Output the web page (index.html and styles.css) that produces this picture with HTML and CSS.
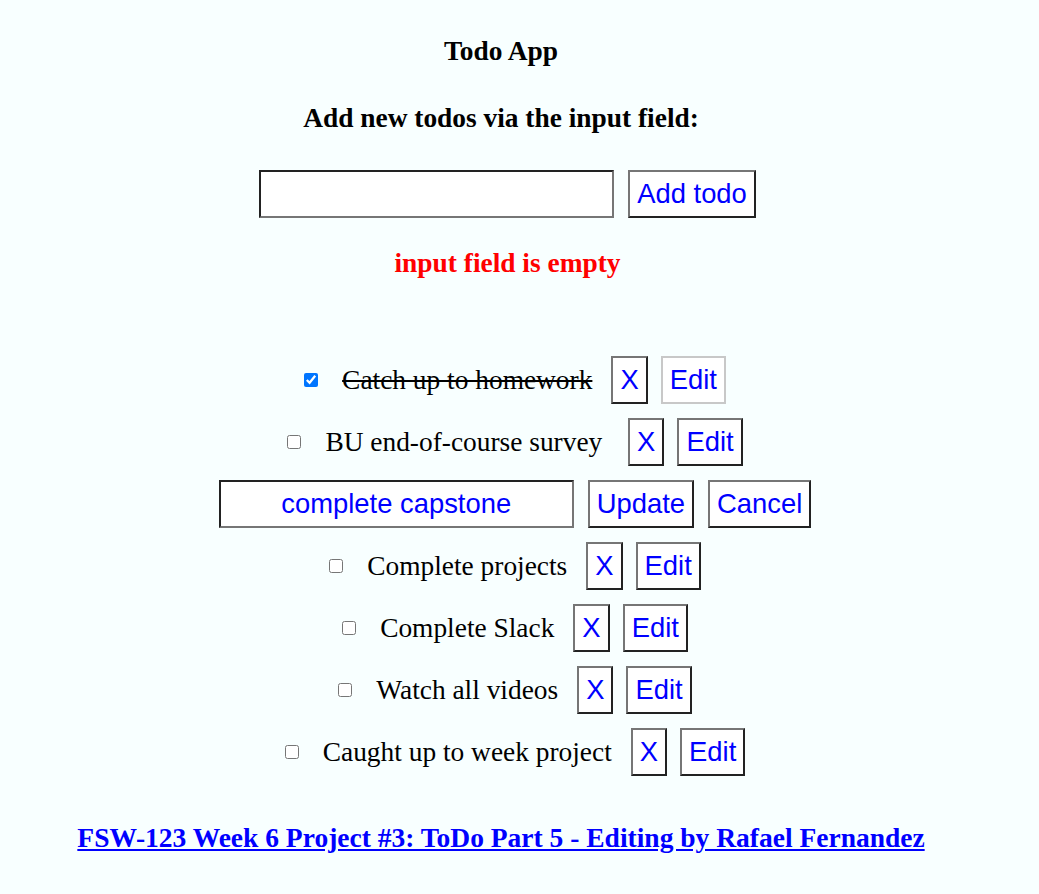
FILE: index.html
```html
<!DOCTYPE html>
<html lang="en">
<head>
<meta charset="utf-8">
<title>Todo App</title>
<link rel="stylesheet" href="styles.css">
</head>
<body>
<div class="app">
  <h1 class="title">Todo App</h1>
  <h2 class="subtitle">Add new todos via the input field:</h2>
  <form class="add-row">
    <input class="text-input" type="text" value="">
    <button class="btn" type="button">Add todo</button>
  </form>
  <p class="error">input field is empty</p>
  <ul class="list">
    <li class="row">
      <input class="check" type="checkbox" checked>
      <span class="item done">Catch up to homework</span>
      <button class="btn btn-x" type="button">X</button>
      <button class="btn btn-edit btn-light" type="button">Edit</button>
    </li>
    <li class="row">
      <input class="check" type="checkbox">
      <span class="item">BU end-of-course survey&nbsp;</span>
      <button class="btn btn-x" type="button">X</button>
      <button class="btn btn-edit" type="button">Edit</button>
    </li>
    <li class="row">
      <input class="text-input edit-input" type="text" value="complete capstone">
      <button class="btn btn-update" type="button">Update</button>
      <button class="btn btn-edit" type="button">Cancel</button>
    </li>
    <li class="row">
      <input class="check" type="checkbox">
      <span class="item">Complete projects</span>
      <button class="btn btn-x" type="button">X</button>
      <button class="btn btn-edit" type="button">Edit</button>
    </li>
    <li class="row">
      <input class="check" type="checkbox">
      <span class="item">Complete Slack</span>
      <button class="btn btn-x" type="button">X</button>
      <button class="btn btn-edit" type="button">Edit</button>
    </li>
    <li class="row">
      <input class="check" type="checkbox">
      <span class="item">Watch all videos</span>
      <button class="btn btn-x" type="button">X</button>
      <button class="btn btn-edit" type="button">Edit</button>
    </li>
    <li class="row">
      <input class="check" type="checkbox">
      <span class="item">Caught up to week project</span>
      <button class="btn btn-x" type="button">X</button>
      <button class="btn btn-edit" type="button">Edit</button>
    </li>
  </ul>
  <h2 class="footer"><a class="footer-link" href="#">FSW-123 Week 6 Project #3: ToDo Part 5 - Editing by Rafael Fernandez</a></h2>
</div>
</body>
</html>
```

FILE: styles.css
```css
html, body {
  margin: 0;
  padding: 0;
  background: #f8ffff;
}

body {
  font-family: "Liberation Serif", "Times New Roman", serif;
  color: #000;
}

.app {
  display: flex;
  flex-direction: column;
  align-items: center;
}

.title {
  margin: 35px 0 0;
  padding-right: 37px;
  font-size: 27.4px;
  line-height: 32px;
  font-weight: bold;
}

.subtitle {
  margin: 35px 0 0;
  padding-right: 37px;
  font-size: 27.4px;
  line-height: 32px;
  font-weight: bold;
}

.add-row {
  margin: 36px 0 0;
  display: flex;
  align-items: center;
  padding-right: 24px;
}

.text-input {
  box-sizing: border-box;
  width: 355px;
  height: 48px;
  margin: 0 14px 0 0;
  padding: 0 8px;
  border-width: 2px;
  border-style: solid;
  border-color: #222 #767676 #767676 #222;
  background: #fff;
  font-family: "Liberation Sans", Arial, sans-serif;
  font-size: 27.4px;
  color: #00f;
  outline: none;
}

.edit-input {
  text-align: center;
}

.btn {
  box-sizing: border-box;
  height: 48px;
  margin: 0;
  padding: 6px 7px;
  border-width: 2px;
  border-style: solid;
  border-color: #767676 #222 #222 #767676;
  background: #fff;
  font-family: "Liberation Sans", Arial, sans-serif;
  font-size: 27.4px;
  line-height: 32px;
  color: #00f;
}

.error {
  margin: 29px 0 0;
  padding-right: 24px;
  font-size: 27.4px;
  line-height: 32px;
  font-weight: bold;
  color: #f00;
}

.list {
  list-style: none;
  margin: 77px 0 0;
  padding: 0;
  display: flex;
  flex-direction: column;
  align-items: center;
  gap: 14px;
}

.row {
  display: flex;
  align-items: center;
  height: 48px;
}

.check {
  width: 14px;
  height: 14px;
  margin: 0 24px 0 0;
}

.item {
  font-size: 27.4px;
  line-height: 32px;
  margin-right: 19px;
  white-space: pre;
}

.done {
  text-decoration: line-through;
}

.btn-x {
  margin-right: 13px;
}

.btn-update {
  margin-right: 14px;
}

.btn-edit {
  margin-right: 9px;
}

.btn-light {
  border-color: #c8c8c8;
}

.footer {
  margin: 46px 0 0;
  padding-right: 37px;
  font-size: 27.5px;
  line-height: 32px;
  font-weight: bold;
}

.footer-link {
  color: #00f;
  text-decoration: underline;
}
```
